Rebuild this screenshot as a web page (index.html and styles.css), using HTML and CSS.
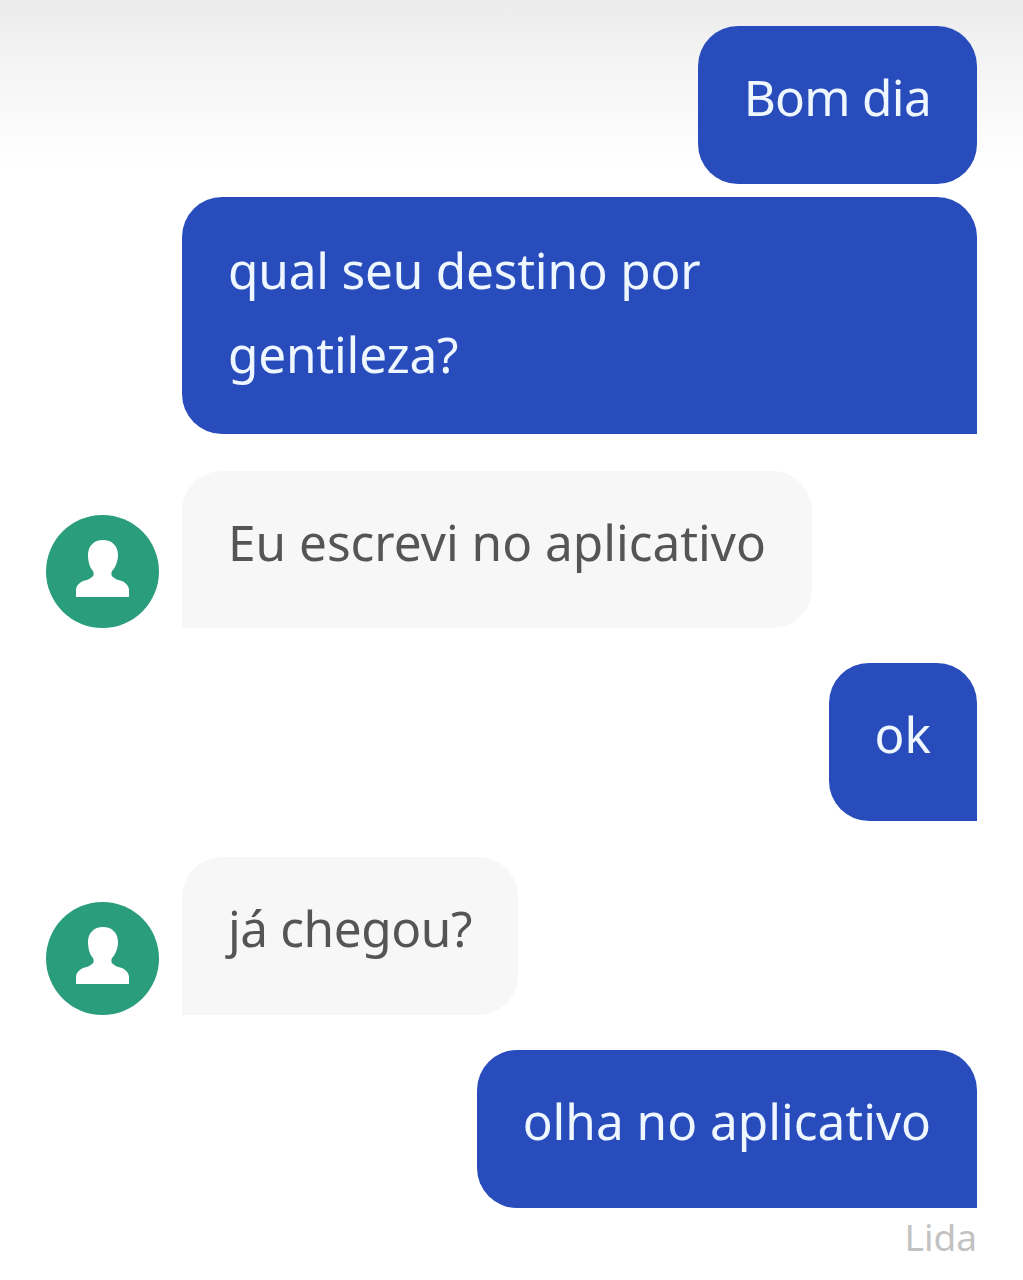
FILE: index.html
```html
<!DOCTYPE html>
<html lang="pt">

<head>
    <meta charset="UTF-8">
    <meta name="viewport" content="width=device-width, initial-scale=1.0">
    <title>Chat</title>
    <link rel="stylesheet" href="styles.css">
</head>

<body>
    <div class="chat">
        <div class="row sent first">
            <div class="bubble out all-round tight">Bom dia</div>
        </div>
        <div class="row sent near">
            <div class="bubble out wide">qual seu destino por<br>gentileza?</div>
        </div>
        <div class="row received far">
            <div class="avatar">
                <svg viewBox="0 0 113 113" width="113" height="113">
                    <path d="M57 25c-9 0-15 6-15 15 0 7 2 13 5 16 1 2 1 5-1 6-2 2-5 3-9 4-4 2-7 5-7 9v7h53v-7c0-4-3-7-7-9-4-1-7-2-9-4-2-1-2-4-1-6 3-3 6-9 6-16 0-9-6-15-15-15z" fill="#fff" />
                </svg>
            </div>
            <div class="bubble in">Eu escrevi no aplicativo</div>
        </div>
        <div class="row sent">
            <div class="bubble out">ok</div>
        </div>
        <div class="row received far-small">
            <div class="avatar">
                <svg viewBox="0 0 113 113" width="113" height="113">
                    <path d="M57 25c-9 0-15 6-15 15 0 7 2 13 5 16 1 2 1 5-1 6-2 2-5 3-9 4-4 2-7 5-7 9v7h53v-7c0-4-3-7-7-9-4-1-7-2-9-4-2-1-2-4-1-6 3-3 6-9 6-16 0-9-6-15-15-15z" fill="#fff" />
                </svg>
            </div>
            <div class="bubble in tight-small">já chegou?</div>
        </div>
        <div class="row sent">
            <div class="bubble out">olha no aplicativo</div>
        </div>
        <div class="status">Lida</div>
    </div>
</body>

</html>
```

FILE: styles.css
```css
html {
    height: 100%;
}

body {
    margin: 0;
    padding: 0;
    min-height: 100%;
    background: #ffffff linear-gradient(#ebebeb 0, #f4f4f4 60px, #ffffff 170px) no-repeat;
    background-size: 100% 170px;
    font-family: "Noto Sans", "Liberation Sans", sans-serif;
}

.chat {
    display: flex;
    flex-direction: column;
    padding: 26px 46px 0 46px;
}

.row {
    display: flex;
    margin-top: 35px;
}

.row.first {
    margin-top: 0;
}

.row.near {
    margin-top: 13px;
}

.row.far {
    margin-top: 37px;
}

.row.far-small {
    margin-top: 36px;
}

.sent {
    justify-content: flex-end;
}

.received {
    align-items: flex-end;
    gap: 23px;
}

.bubble {
    box-sizing: border-box;
    padding: 29px 46px 45px 46px;
    font-size: 49.5px;
    line-height: 84px;
    border-radius: 40px;
}

.out {
    background: #284cbc;
    color: #eef6ff;
    border-bottom-right-radius: 0;
}

.out.all-round {
    border-bottom-right-radius: 40px;
}

.out.wide {
    width: 795px;
    padding-top: 31px;
    padding-bottom: 38px;
    letter-spacing: -0.2px;
}

.in {
    background: #f7f7f7;
    color: #555555;
    border-bottom-left-radius: 0;
    padding-bottom: 44px;
}

.tight {
    letter-spacing: -0.7px;
}

.in.tight-small {
    letter-spacing: -0.4px;
    padding-bottom: 45px;
}

.avatar {
    width: 113px;
    height: 113px;
    flex: none;
    border-radius: 50%;
    background: #2a9d7c;
}

.avatar svg {
    display: block;
}

.status {
    margin-top: 7px;
    text-align: right;
    font-size: 37px;
    line-height: 44px;
    color: #c2c2c2;
}
```
